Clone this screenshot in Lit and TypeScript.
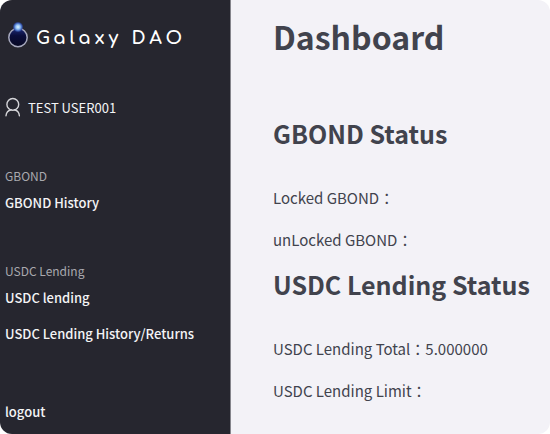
import { LitElement, html, css } from "lit";
import { customElement, property } from "lit/decorators.js";

interface NavGroup {
  title: string;
  links: string[];
}

interface StatusSection {
  title: string;
  rows: { label: string; value: string }[];
}

const groups: NavGroup[] = [
  { title: "GBOND", links: ["GBOND History"] },
  { title: "USDC Lending", links: ["USDC lending", "USDC Lending History/Returns"] },
];

const sections: StatusSection[] = [
  {
    title: "GBOND Status",
    rows: [
      { label: "Locked GBOND", value: "" },
      { label: "unLocked GBOND", value: "" },
    ],
  },
  {
    title: "USDC Lending Status",
    rows: [
      { label: "USDC Lending Total", value: "5.000000" },
      { label: "USDC Lending Limit", value: "" },
    ],
  },
];

@customElement("side-nav")
export class SideNav extends LitElement {
  @property() user = "";

  static styles = css`
    :host {
      display: flex;
      flex-direction: column;
      box-sizing: border-box;
      padding: 16px 5px 10px;
      background: #26262f;
      border-right: 1px solid #85858c;
      color: #f4f4f6;
      font-size: 13px;
      line-height: 24px;
      white-space: nowrap;
    }
    .brand {
      display: flex;
      align-items: center;
      gap: 7px;
      height: 40px;
      margin-bottom: 40px;
      color: #ffffff;
      text-decoration: none;
    }
    .mark {
      width: 24px;
      height: 32px;
      margin-bottom: 4px;
    }
    .name {
      padding-top: 4px;
      font-family: Comfortaa, "Inter", sans-serif;
      font-size: 18px;
      font-weight: 700;
      letter-spacing: 4px;
    }
    .user {
      display: flex;
      align-items: center;
      gap: 7px;
    }
    .person {
      width: 16px;
      height: 20px;
      margin-bottom: 2px;
    }
    nav {
      display: flex;
      flex-direction: column;
      gap: 46px;
      margin: 46px 0 54px;
    }
    h2 {
      margin: 0 0 5px;
      font-size: 12px;
      font-weight: 400;
      line-height: 20px;
      color: #a9a9ae;
    }
    ul {
      display: grid;
      gap: 12px;
      margin: 0;
      padding: 0;
      list-style: none;
    }
    .link {
      display: block;
      color: inherit;
      text-decoration: none;
      font-weight: 500;
    }
  `;

  render() {
    return html`
      <a class="brand" href="#">
        <svg class="mark" viewBox="0 0 24 32" aria-hidden="true">
          <defs>
            <radialGradient id="glow">
              <stop offset="0" stop-color="#e4f6ff" />
              <stop offset="0.4" stop-color="#8fc0f4" />
              <stop offset="0.75" stop-color="#3655b0" />
              <stop offset="1" stop-color="#26386f" stop-opacity="0" />
            </radialGradient>
            <linearGradient id="orb" x1="0" y1="0" x2="0" y2="1">
              <stop offset="0" stop-color="#1c2a78" />
              <stop offset="0.4" stop-color="#0b0e3c" />
              <stop offset="1" stop-color="#070822" />
            </linearGradient>
          </defs>
          <circle cx="13" cy="19.5" r="9.2" fill="url(#orb)" stroke="#a6a8bd" stroke-width="1.5" />
          <circle cx="13" cy="9" r="5.5" fill="url(#glow)" />
        </svg>
        <span class="name">Galaxy DAO</span>
      </a>
      <div class="user">
        <svg class="person" viewBox="0 0 16 20" fill="none" stroke="#d4d4d8" stroke-width="1.4" stroke-linecap="round" aria-hidden="true">
          <circle cx="7.8" cy="7.4" r="5.9" />
          <path d="M1 18.8c.3-3.2 2.4-5.4 5.2-6M14.4 18.8c-.3-3.2-2.2-5.4-5-6" />
        </svg>
        <span>${this.user}</span>
      </div>
      <nav>
        ${groups.map(
          (g) => html`<section>
            <h2>${g.title}</h2>
            <ul>
              ${g.links.map((l) => html`<li><a class="link" href="#">${l}</a></li>`)}
            </ul>
          </section>`
        )}
      </nav>
      <a class="link" href="#">logout</a>
    `;
  }
}

@customElement("app-root")
export class AppRoot extends LitElement {
  static styles = css`
    :host {
      display: grid;
      grid-template-columns: 42% 1fr;
      min-height: 100vh;
      overflow: hidden;
      border-radius: 12px;
      background: #f3f2f7;
      color: #41434d;
      font-family: "Noto Sans CJK JP", "Noto Sans", sans-serif;
    }
    main {
      padding: 16px 0 16px 42px;
      font-size: 15px;
      line-height: 24px;
      white-space: nowrap;
    }
    h1 {
      margin: 0 0 59px;
      font-size: 32px;
      line-height: 40px;
    }
    section + section {
      margin-top: 14px;
    }
    h2 {
      margin: 0 0 35px;
      font-size: 25px;
      line-height: 36px;
    }
    p {
      margin: 0;
    }
    p + p {
      margin-top: 18px;
    }
  `;

  render() {
    return html`
      <side-nav user="TEST USER001"></side-nav>
      <main>
        <h1>Dashboard</h1>
        ${sections.map(
          (s) => html`<section>
            <h2>${s.title}</h2>
            ${s.rows.map((r) => html`<p>${r.label}：${r.value}</p>`)}
          </section>`
        )}
      </main>
    `;
  }
}
